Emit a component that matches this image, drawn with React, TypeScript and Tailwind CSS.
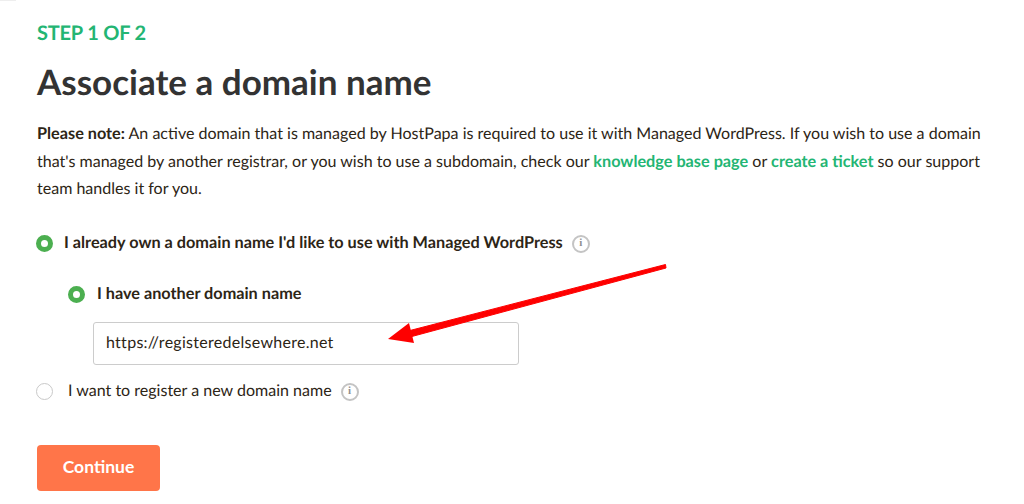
import React from "react";

function InfoIcon() {
  return (
    <span className="w-[18px] h-[18px] rounded-full border-2 border-[#c4c4c4] flex items-center justify-center text-[11px] font-bold leading-none text-[#8f8f8f] font-['Liberation_Serif',serif] shrink-0">
      i
    </span>
  );
}

function Radio({ checked }: { checked?: boolean }) {
  return checked ? (
    <span className="w-[17px] h-[17px] rounded-full border-[5px] border-[#4caf50] bg-white shrink-0" />
  ) : (
    <span className="w-[17px] h-[17px] rounded-full border border-[#c9c9c9] bg-white shrink-0" />
  );
}

export default function App() {
  return (
    <div className="relative w-[1024px] h-[504px] overflow-hidden bg-white pl-[36px] pt-[20px] font-['Lato',sans-serif] text-[#2d2516] [text-rendering:geometricPrecision]">
      <div className="absolute left-0 top-0 w-[16px] h-[1px] bg-[#eeeeee]" />
      <div className="ml-[1px] text-[20px] leading-[26px] font-bold tracking-[-0.2px] text-[#23b573]">STEP 1 OF 2</div>
      <h1 className="ml-[1px] mt-[14px] text-[35px] leading-[44px] font-bold text-[#333333]">Associate a domain name</h1>
      <p className="ml-[1px] mt-[16px] w-[960px] text-[16.05px] leading-[27.5px]">
        <strong className="font-bold text-[16.25px]">Please note:</strong> An active domain that is managed by HostPapa is required to use it with Managed WordPress. If you wish to use a domain that's managed by another registrar, or you wish to use a subdomain, check our{" "}
        <a className="font-bold text-[16.25px] text-[#23b573]">knowledge base page</a> or{" "}
        <a className="font-bold text-[16.25px] text-[#23b573]">create a ticket</a> so our support team handles it for you.
      </p>

      <div className="mt-[29px] flex items-center h-[24px]">
        <Radio checked />
        <span className="ml-[11px] text-[16.28px] font-bold">I already own a domain name I'd like to use with Managed WordPress</span>
        <span className="ml-[9px]"><InfoIcon /></span>
      </div>

      <div className="mt-[27px] ml-[32px] flex items-center h-[24px]">
        <Radio checked />
        <span className="ml-[12px] text-[16.25px] font-bold">I have another domain name</span>
      </div>

      <div className="mt-[15px] ml-[57px] w-[426px] h-[43px] rounded-[3px] border border-[#cccccc] flex items-center pl-[12px] text-[16px] tracking-[0.28px]">
        https://registeredelsewhere.net
      </div>

      <div className="mt-[15px] flex items-center h-[24px]">
        <Radio />
        <span className="ml-[15px] text-[16.05px]">I want to register a new domain name</span>
        <span className="ml-[9px]"><InfoIcon /></span>
      </div>

      <button className="mt-[41px] ml-[1px] w-[123px] h-[46px] rounded-[4px] bg-[#ff7549] text-white text-[17.5px] font-bold">
        Continue
      </button>

      <svg className="absolute left-0 top-0" width="1024" height="504" viewBox="0 0 1024 504">
        <path d="M665.5 264.5 L666 268 L410 337 L408 331 Z" fill="#fe0000" stroke="#fe0000" strokeWidth="1" strokeLinejoin="round" />
        <polygon points="388,339 409,323 414,343" fill="#fe0000" />
      </svg>
    </div>
  );
}
